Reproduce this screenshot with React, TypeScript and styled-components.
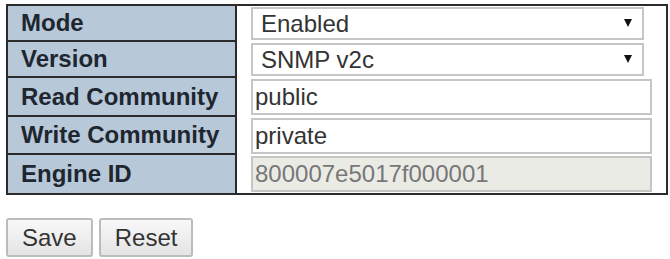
import React from 'react';
import styled, { createGlobalStyle } from 'styled-components';

const GlobalStyle = createGlobalStyle`
  body {
    margin: 0;
    background: #ffffff;
    font-family: "Liberation Sans", Arial, sans-serif;
  }
`;

const Page = styled.div`
  padding: 4px 0 0 6px;
`;

const ConfigTable = styled.div`
  width: 662px;
  box-sizing: border-box;
  border: 2px solid #2b2b2b;
  display: grid;
  grid-template-columns: 229px 1fr;
  grid-template-rows: 36px 36px 39px 38px 38px;
`;

const Label = styled.div<{ $last?: boolean }>`
  background: #b7c8d9;
  border-right: 2px solid #2b2b2b;
  border-bottom: ${(p) => (p.$last ? 'none' : '2px solid #2b2b2b')};
  padding-left: 13px;
  display: flex;
  align-items: center;
  font-size: 24px;
  font-weight: 700;
  color: #1e2630;
`;

const Value = styled.div`
  background: #ffffff;
  padding: 1px 0 0 14px;
  display: flex;
  align-items: flex-start;
`;

const SelectWrap = styled.div`
  position: relative;
  width: 393px;
  height: 33px;

  &::after {
    content: '';
    position: absolute;
    right: 12px;
    top: 12px;
    border-left: 4.5px solid transparent;
    border-right: 4.5px solid transparent;
    border-top: 8px solid #111111;
    pointer-events: none;
  }
`;

const Select = styled.select`
  appearance: none;
  -webkit-appearance: none;
  width: 100%;
  height: 100%;
  box-sizing: border-box;
  border: 2px solid #c6c6c6;
  border-radius: 0;
  background: #ffffff;
  padding: 0 0 0 8px;
  font-family: "Liberation Sans", Arial, sans-serif;
  font-size: 24px;
  color: #333333;
  outline: none;
`;

const Input = styled.input<{ $disabled?: boolean }>`
  width: 401px;
  height: 36px;
  box-sizing: border-box;
  border: 2px solid #c6c6c6;
  padding: 0 0 0 2px;
  font-family: "Liberation Sans", Arial, sans-serif;
  font-size: 24px;
  color: ${(p) => (p.$disabled ? '#777777' : '#333333')};
  background: ${(p) => (p.$disabled ? '#ebebe6' : '#ffffff')};
  outline: none;
`;

const Buttons = styled.div`
  display: flex;
  gap: 6px;
  margin-top: 23px;
`;

const Button = styled.button`
  height: 39px;
  box-sizing: border-box;
  padding: 0 14px;
  border: 2px solid #bcbcbc;
  border-radius: 3px;
  background: linear-gradient(#f8f8f8, #e4e4e4);
  font-family: "Liberation Sans", Arial, sans-serif;
  font-size: 24px;
  color: #333333;
  cursor: pointer;
`;

export default function App() {
  return (
    <Page>
      <GlobalStyle />
      <ConfigTable>
        <Label>Mode</Label>
        <Value>
          <SelectWrap>
            <Select defaultValue="Enabled">
              <option>Enabled</option>
              <option>Disabled</option>
            </Select>
          </SelectWrap>
        </Value>
        <Label>Version</Label>
        <Value>
          <SelectWrap>
            <Select defaultValue="SNMP v2c">
              <option>SNMP v1</option>
              <option>SNMP v2c</option>
            </Select>
          </SelectWrap>
        </Value>
        <Label>Read Community</Label>
        <Value>
          <Input defaultValue="public" />
        </Value>
        <Label>Write Community</Label>
        <Value>
          <Input defaultValue="private" />
        </Value>
        <Label $last>Engine ID</Label>
        <Value>
          <Input $disabled readOnly defaultValue="800007e5017f000001" />
        </Value>
      </ConfigTable>
      <Buttons>
        <Button type="button">Save</Button>
        <Button type="button">Reset</Button>
      </Buttons>
    </Page>
  );
}
